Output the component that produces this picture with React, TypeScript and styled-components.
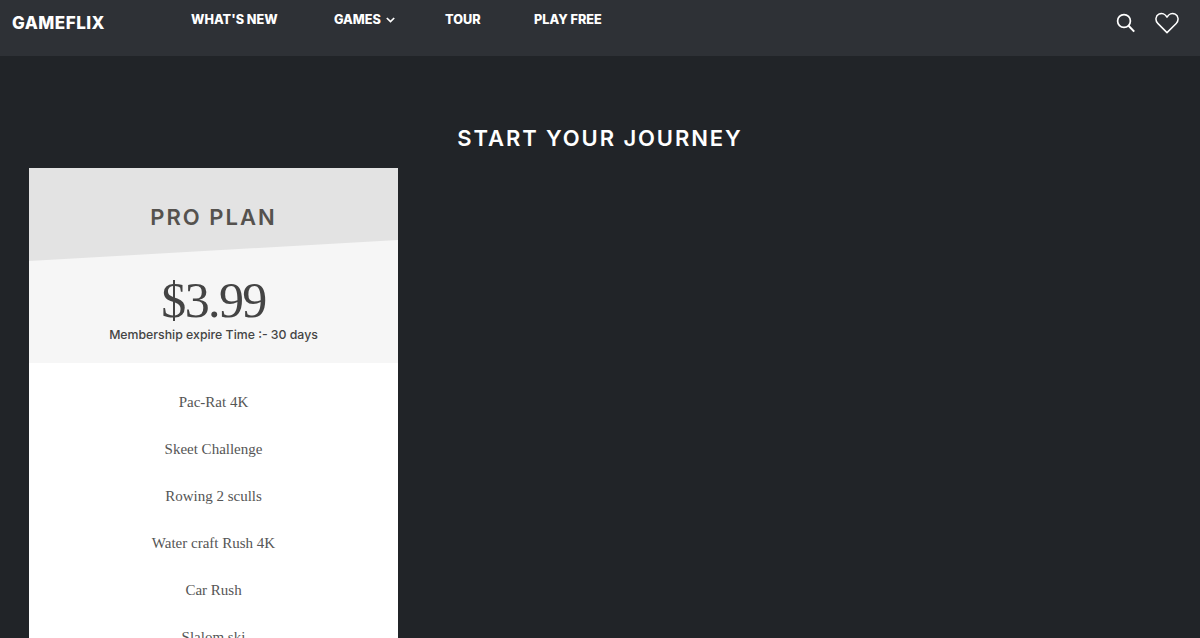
import React from "react";
import styled, { createGlobalStyle } from "styled-components";

const Global = createGlobalStyle`
  html, body { margin: 0; height: 100%; overflow: hidden; background: #212428; }
  * { box-sizing: border-box; }
`;
const Page = styled.div`
  height: 638px;
  overflow: hidden;
  background: #212428;
`;
const Header = styled.header`
  height: 56px;
  background: #2e3136;
  display: flex;
  align-items: flex-start;
  padding: 0 21.500px 0 12px;
`;
const Logo = styled.div`
  width: 179px;
  padding-top: 13px;
  font: 800 17px/20px Inter, sans-serif;
  letter-spacing: 0.5px;
  color: #fff;
`;
const Nav = styled.nav`
  display: flex;
  flex: 1;
  padding-top: 12px;
`;
const NavItem = styled.a<{ $w: number }>`
  width: ${(p) => p.$w}px;
  display: flex;
  align-items: center;
  gap: 5px;
  font: 800 12.7px/16px Inter, sans-serif;
  color: #fff;
  white-space: nowrap;
`;
const Icons = styled.div`
  display: flex;
  align-items: center;
  gap: 19px;
  padding-top: 12px;
`;
const Title = styled.h1`
  margin: 0;
  padding-top: 67px;
  height: 112px;
  text-align: center;
  font: 600 22px/30px Inter, sans-serif;
  letter-spacing: 1.9px;
  color: #fff;
`;
const Card = styled.section`
  width: 369px;
  margin-left: 29px;
  background: #fff;
`;
const Top = styled.div`
  position: relative;
  height: 195px;
  background: #e3e3e3;
  text-align: center;
  color: #444;
`;
const Wedge = styled.div`
  position: absolute;
  inset: 0;
  background: #f6f6f6;
  clip-path: polygon(0 93px, 100% 72px, 100% 100%, 0 100%);
`;
const TopContent = styled.div`
  position: relative;
  display: flex;
  flex-direction: column;
  align-items: center;
`;
const PlanName = styled.h2`
  margin: 34px 0 0;
  font: 600 22px/30px Inter, sans-serif;
  letter-spacing: 2px;
  color: #55524e;
`;
const Price = styled.div`
  margin-top: 40px;
  font: 400 50px/56px "Liberation Serif", serif;
  letter-spacing: -1.6px;
  color: #444;
`;
const Expire = styled.div`
  margin-top: -2px;
  font: 500 12.3px/18px Inter, sans-serif;
  color: #444;
`;
const List = styled.ul`
  list-style: none;
  margin: 0;
  padding: 16px 0 0;
`;
const Item = styled.li`
  height: 47.1px;
  text-align: center;
  font: 400 15px/47px "Liberation Serif", serif;
  color: #555;
`;

const games = ["Pac-Rat 4K", "Skeet Challenge", "Rowing 2 sculls", "Water craft Rush 4K", "Car Rush", "Slalom ski"];

export default function App() {
  return (
    <Page>
      <Global />
      <Header>
        <Logo>GAMEFLIX</Logo>
        <Nav>
          <NavItem $w={143}>WHAT'S NEW</NavItem>
          <NavItem $w={111}>
            GAMES
            <svg width="9" height="6" viewBox="0 0 9 6" fill="none" stroke="#fff" strokeWidth="1.7">
              <path d="M.8 1l3.7 3.6L8.2 1" />
            </svg>
          </NavItem>
          <NavItem $w={89}>TOUR</NavItem>
          <NavItem $w={80}>PLAY FREE</NavItem>
        </Nav>
        <Icons>
          <svg width="20" height="20" viewBox="0 0 20 20" fill="none" stroke="#fff" strokeWidth="1.7">
            <circle cx="8" cy="8" r="6.4" />
            <path d="M12.600 12.800l5.600 5.800" strokeWidth="2" />
          </svg>
          <svg width="24" height="22" viewBox="0 0 24 22" fill="none" stroke="#fff" strokeWidth="1.5" strokeLinejoin="round">
            <path d="M12 20.600L2.800 11.400C-.2 8.300.7 3.800 3.800 2.200 7 .6 10.300 2 12 5.200 13.700 2 17 .6 20.200 2.200c3.100 1.600 4 6.100 1 9.200z" />
          </svg>
        </Icons>
      </Header>
      <Title>START YOUR JOURNEY</Title>
      <Card>
        <Top>
          <Wedge />
          <TopContent>
            <PlanName>PRO PLAN</PlanName>
            <Price>$3.99</Price>
            <Expire>Membership expire Time :- 30 days</Expire>
          </TopContent>
        </Top>
        <List>
          {games.map((g) => (
            <Item key={g}>{g}</Item>
          ))}
        </List>
      </Card>
    </Page>
  );
}
